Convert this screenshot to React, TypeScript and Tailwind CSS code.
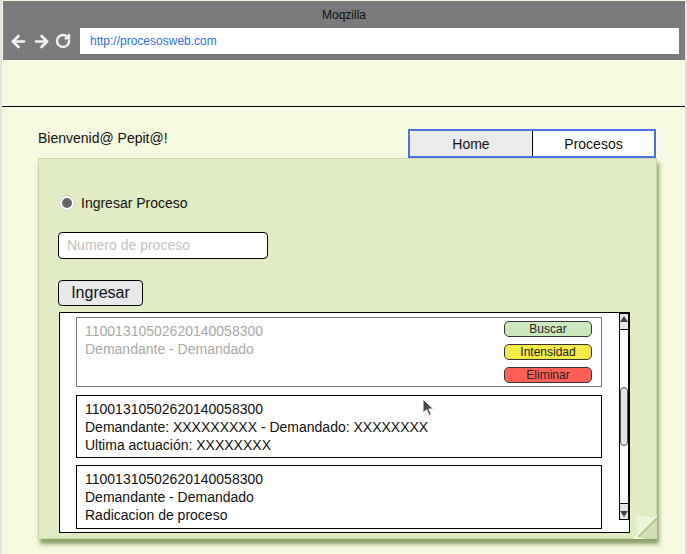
import { ArrowLeft, ArrowRight, RotateCw } from "lucide-react";

const font = { fontFamily: '"Liberation Sans", Arial, sans-serif' };

function Cursor() {
  return (
    <svg
      className="absolute left-[420px] top-[398px]"
      width="14"
      height="20"
      viewBox="0 0 14 20"
    >
      <path
        d="M1 1 L1 15 L4.5 11.8 L7.2 17.5 L9.4 16.5 L6.8 11 L11.5 11 Z"
        fill="#4a4a4a"
        stroke="#ffffff"
        strokeWidth="1"
      />
    </svg>
  );
}

function ScrollBar() {
  return (
    <div className="w-[10px] h-[207px] border border-black bg-white flex flex-col justify-between relative">
      <div className="h-[16px] border-b border-black bg-[#e6e6e6] flex items-start justify-center pt-[2px]">
        <svg width="8" height="6" viewBox="0 0 8 6">
          <path d="M0 6 L4 0 L8 6 Z" fill="#444" />
        </svg>
      </div>
      <div className="absolute left-0 top-[73px] w-[8px] h-[59px] rounded-[4px] border border-[#555] bg-[#e4e4e4]" />
      <div className="h-[16px] border-t border-black bg-[#e6e6e6] flex items-end justify-center pb-[2px]">
        <svg width="8" height="6" viewBox="0 0 8 6">
          <path d="M0 0 L8 0 L4 6 Z" fill="#444" />
        </svg>
      </div>
    </div>
  );
}

export default function App() {
  return (
    <div
      className="w-[687px] h-[554px] bg-[#f6f8df] border-x-2 border-[#e2e2e2] relative overflow-hidden"
      style={font}
    >
      {/* barra del navegador */}
      <div className="mt-[1px] h-[59px] bg-[#7b7b7b] ml-[1px]">
        <div className="h-[27px] flex items-center justify-center text-[12px] text-[#111]">
          Moqzilla
        </div>
        <div className="flex items-center h-[26px]">
          <div className="flex items-center gap-[4px] pl-[6px] w-[77px] text-[#f2f2f2]">
            <ArrowLeft size={19} strokeWidth={3.4} />
            <ArrowRight size={19} strokeWidth={3.4} />
            <RotateCw size={16} strokeWidth={3.6} />
          </div>
          <div className="w-[599px] h-[26px] bg-white flex items-center pl-[10px] text-[12px] text-[#2f6fe0]">
            http://procesosweb.com
          </div>
        </div>
      </div>

      <div className="h-[47px] border-b border-black" />

      {/* saludo y pestañas */}
      <div className="flex justify-between items-start pl-[36px] pr-[29px] mt-[22px]">
        <div className="text-[14px] leading-[16px] text-[#111] pt-[1px]">
          Bienvenid@ Pepit@!
        </div>
        <div className="w-[248px] h-[29px] border-2 border-[#4b72e0] flex bg-white">
          <div className="w-[123px] h-full bg-[#ebebeb] rounded-tl-[6px] border-r border-black flex items-center justify-center text-[14px] text-[#111] pt-[1px]">
            Home
          </div>
          <div className="flex-1 h-full bg-white rounded-t-[6px] flex items-center justify-center text-[14px] text-[#111] pt-[1px]">
            Procesos
          </div>
        </div>
      </div>

      {/* panel principal */}
      <div className="relative ml-[36px] w-[619px] h-[381px] bg-[#e1ecc4] border border-[#c9dca8] shadow-[2px_5px_4px_rgba(100,130,60,0.75)] pt-[36px] pl-[20px]">
        <div className="flex items-center gap-[6px] h-[16px]">
          <div className="w-[16px] h-[16px] rounded-full bg-white border border-[#cfcfcf] flex items-center justify-center">
            <div className="w-[10px] h-[10px] rounded-full bg-[#666]" />
          </div>
          <span className="text-[14px] text-[#111]">Ingresar Proceso</span>
        </div>

        <div className="mt-[21px] -ml-[1px] w-[210px] h-[27px] bg-white border border-black rounded-[4px] flex items-center pl-[8px] text-[14px] text-[#c2c2c2]">
          Numero de proceso
        </div>

        <div className="mt-[21px] -ml-[1px] w-[85px] h-[26px] bg-[#e9e9e9] border border-black rounded-[4px] flex items-center justify-center text-[16px] text-[#111]">
          Ingresar
        </div>

        <div className="mt-[6px] w-[571px] h-[221px] bg-white border border-black flex">
          <div className="flex-1 pl-[16px] pr-[17px] pt-[4px] flex flex-col gap-[8px] overflow-hidden">
            <div className="h-[70px] shrink-0 border border-[#777] flex justify-between">
              <div className="pl-[8px] pt-[4px] text-[14px] leading-[18px] text-[#a8a8a8]">
                <div>11001310502620140058300</div>
                <div>Demandante - Demandado</div>
              </div>
              <div className="flex flex-col gap-[7px] pt-[3px] pr-[9px]">
                <div className="w-[88px] h-[16px] rounded-[5px] border border-[#333] bg-[#cce8bf] flex items-center justify-center text-[12px] text-[#222]">
                  Buscar
                </div>
                <div className="w-[88px] h-[16px] rounded-[5px] border border-[#333] bg-[#f4ea45] flex items-center justify-center text-[12px] text-[#222]">
                  Intensidad
                </div>
                <div className="w-[88px] h-[16px] rounded-[5px] border border-[#333] bg-[#ff5f57] flex items-center justify-center text-[12px] text-[#222]">
                  Eliminar
                </div>
              </div>
            </div>
            <div className="h-[63px] shrink-0 border border-black pl-[8px] pt-[4px] text-[14px] leading-[18px] text-[#111]">
              <div>11001310502620140058300</div>
              <div>Demandante: XXXXXXXXX - Demandado: XXXXXXXX</div>
              <div>Ultima actuación: XXXXXXXX</div>
            </div>
            <div className="h-[64px] shrink-0 -mt-[1px] border border-black pl-[8px] pt-[4px] text-[14px] leading-[18px] text-[#111]">
              <div>11001310502620140058300</div>
              <div>Demandante - Demandado</div>
              <div>Radicacion de proceso</div>
            </div>
          </div>
          <ScrollBar />
        </div>

        {/* esquina doblada */}
        <svg
          className="absolute right-[-1px] bottom-[-1px]"
          width="24"
          height="24"
          viewBox="0 0 24 24"
        >
          <path d="M24 0 L24 24 L0 24 Z" fill="#f6f8df" />
          <path d="M24 3 L6 22 L12 24 L24 24 Z" fill="#b9cc95" opacity="0.6" />
          <path d="M2 0 L24 3 L5 22 Z" fill="#eef3dc" />
          <path d="M24 3 L5 22" stroke="#a4bd7d" strokeWidth="1.5" />
        </svg>
      </div>

      <Cursor />
    </div>
  );
}
